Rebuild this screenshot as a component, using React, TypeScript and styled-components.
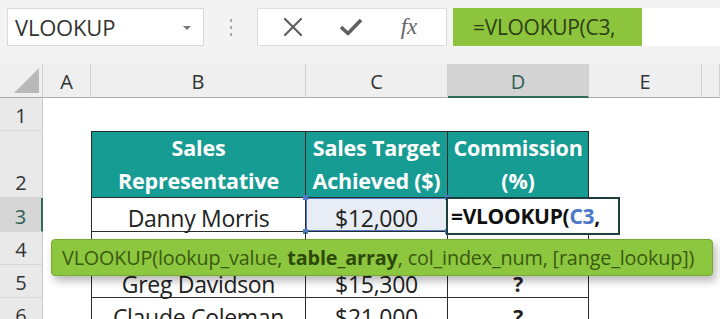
import React from "react";
import styled, { createGlobalStyle, css } from "styled-components";

const GlobalStyle = createGlobalStyle`
  html, body { margin: 0; padding: 0; background: #ffffff; overflow: hidden; }
  * { box-sizing: border-box; }
`;

const UI_FONT = `"Open Sans", "Liberation Sans", sans-serif`;

const Window = styled.div`
  position: relative;
  width: 720px;
  height: 319px;
  overflow: hidden;
  background: #ffffff;
  font-family: ${UI_FONT};
  color: #222;
`;

const TopBar = styled.div`
  height: 64px;
  background: #f3f3f3;
  display: flex;
  align-items: flex-start;
  padding: 8px 0 0 7px;
`;

const NameBox = styled.div`
  width: 197px;
  height: 38px;
  background: #fff;
  border: 1px solid #d9d9d9;
  display: flex;
  align-items: center;
  justify-content: space-between;
  padding: 0 12px 0 7px;
  font-size: 22px;
  color: #333;
  letter-spacing: -0.2px;
`;

const DropArrow = styled.span`
  width: 0;
  height: 0;
  border-left: 4px solid transparent;
  border-right: 4px solid transparent;
  border-top: 4px solid #777;
  margin-top: 2px;
`;

const Grip = styled.div`
  width: 53px;
  height: 38px;
  display: flex;
  flex-direction: column;
  align-items: center;
  justify-content: center;
  gap: 4px;
`;

const Dot = styled.span`
  width: 2px;
  height: 3px;
  background: #a8a8a8;
`;

const ButtonBox = styled.div`
  width: 190px;
  height: 38px;
  background: #fff;
  border: 1px solid #dcdcdc;
  display: flex;
  align-items: center;
  justify-content: space-around;
  padding: 0 8px 0 6px;
`;

const IconSlot = styled.span`
  width: 40px;
  display: flex;
  align-items: center;
  justify-content: center;
`;

const Fx = styled.span`
  font-family: "Liberation Serif", "DejaVu Serif", serif;
  font-style: italic;
  font-size: 23px;
  color: #666;
`;

const FormulaInput = styled.div`
  flex: 1;
  height: 38px;
  margin-left: 6px;
  background: #fff;
  display: flex;
  align-items: stretch;
`;

const FormulaHighlight = styled.div`
  width: 189px;
  background: #8cc43d;
  display: flex;
  align-items: center;
  padding-left: 20px;
  font-size: 21px;
  color: #2e3e14;
  letter-spacing: -0.3px;
`;

const Sheet = styled.div`
  display: grid;
  grid-template-columns: 43px 48px 215px 142px 141px 113px 1fr;
  grid-template-rows: 34px 33px 67px 34px 33px 33px 33px;
`;

const Corner = styled.div`
  background: #efefef;
  border-bottom: 1px solid #ababab;
  border-right: 1px solid #d0d0d0;
  position: relative;
  &::after {
    content: "";
    position: absolute;
    right: 3px;
    bottom: 4px;
    width: 0;
    height: 0;
    border-left: 25px solid transparent;
    border-bottom: 25px solid #b9b9b9;
  }
`;

const ColHeader = styled.div<{ $active?: boolean }>`
  background: #efefef;
  border-right: 1px solid #d0d0d0;
  border-bottom: 1px solid #ababab;
  display: flex;
  align-items: center;
  justify-content: center;
  padding-top: 2px;
  font-size: 20px;
  color: #333;
  ${(p) =>
    p.$active &&
    css`
      background: #d3d3d3;
      border-bottom: 2px solid #2f6b55;
      color: #2f5f50;
    `}
`;

const RowHeader = styled.div<{ $active?: boolean }>`
  background: #e9e9e9;
  border-right: 1px solid #c9c9c9;
  border-bottom: 1px solid #d6d6d6;
  display: flex;
  align-items: flex-end;
  justify-content: center;
  padding-bottom: 1px;
  font-size: 20px;
  color: #333;
  ${(p) =>
    p.$active &&
    css`
      background: #d6d6d6;
      border-right: 2px solid #2f6b55;
      color: #2f5f50;
    `}
`;

const Blank = styled.div``;

type CellKind = "head" | "data";

const Cell = styled.div<{
  $kind: CellKind;
  $left?: boolean;
  $top?: boolean;
  $bold?: boolean;
  $ref?: boolean;
}>`
  position: relative;
  display: flex;
  flex-direction: column;
  align-items: center;
  justify-content: flex-end;
  padding-bottom: 0;
  font-size: 23px;
  line-height: 26px;
  letter-spacing: -0.3px;
  color: #222;
  white-space: nowrap;
  border-right: 1px solid #2b2b2b;
  border-bottom: 1px solid #2b2b2b;
  ${(p) => p.$left && css`border-left: 1px solid #2b2b2b;`}
  ${(p) => p.$top && css`border-top: 1px solid #2b2b2b;`}
  ${(p) => p.$bold && css`font-weight: 700; font-size: 21px;`}
  ${(p) =>
    p.$kind === "head" &&
    css`
      background: #179c94;
      color: #ffffff;
      font-weight: 700;
      font-size: 21.5px;
      line-height: 33px;
      letter-spacing: -0.2px;
    `}
  ${(p) =>
    p.$ref &&
    css`
      background: #e8ecf4;
      box-shadow: inset 0 0 0 1px #4f7cc6;
    `}
`;

const Handle = styled.span<{ $pos: "tl" | "tr" | "bl" | "br" }>`
  position: absolute;
  width: 5px;
  height: 5px;
  background: #4f7cc6;
  ${(p) => (p.$pos[0] === "t" ? "top: -3px;" : "bottom: -3px;")}
  ${(p) => (p.$pos[1] === "l" ? "left: -3px;" : "right: -3px;")}
`;

const Editor = styled.div`
  position: absolute;
  left: -2px;
  top: -1px;
  width: 174px;
  height: 38px;
  background: #fff;
  border: 2px solid #1f3f3e;
  display: flex;
  align-items: center;
  padding-left: 3px;
  font-weight: 700;
  font-size: 21px;
  letter-spacing: -0.3px;
  color: #111;
  z-index: 2;
`;

const RefText = styled.span`
  color: #4a78c8;
`;

const Tooltip = styled.div`
  position: absolute;
  left: 51px;
  top: 239px;
  width: 662px;
  height: 37px;
  background: #8dc63f;
  border: 1px solid #78a834;
  border-radius: 4px;
  box-shadow: 3px 5px 9px rgba(0, 0, 0, 0.28);
  display: flex;
  align-items: center;
  padding-left: 10px;
  font-size: 19.8px;
  letter-spacing: -0.15px;
  color: #3a5a10;
  white-space: nowrap;
  z-index: 5;
`;

const Strong = styled.b`
  font-weight: 700;
  color: #2e4a0a;
`;

const CloseIcon = () => (
  <svg width="22" height="22" viewBox="0 0 22 22">
    <path d="M3 3 L19 19 M19 3 L3 19" stroke="#606060" strokeWidth="2.2" strokeLinecap="round" />
  </svg>
);

const CheckIcon = () => (
  <svg width="24" height="20" viewBox="0 0 24 20">
    <path d="M2 10 L9 16.5 L22 3" stroke="#606060" strokeWidth="3.6" fill="none" strokeLinejoin="round" />
  </svg>
);

const cols = ["A", "B", "C", "D", "E", ""];

const rows: { name: string; amount: string; comm: string }[] = [
  { name: "Danny Morris", amount: "$12,000", comm: "" },
  { name: "Sarah Jones", amount: "$9,500", comm: "?" },
  { name: "Greg Davidson", amount: "$15,300", comm: "?" },
  { name: "Claude Coleman", amount: "$21,000", comm: "?" },
];

export default function App() {
  return (
    <Window>
      <GlobalStyle />
      <TopBar>
        <NameBox>
          VLOOKUP
          <DropArrow />
        </NameBox>
        <Grip>
          <Dot />
          <Dot />
          <Dot />
        </Grip>
        <ButtonBox>
          <IconSlot>
            <CloseIcon />
          </IconSlot>
          <IconSlot>
            <CheckIcon />
          </IconSlot>
          <IconSlot>
            <Fx>fx</Fx>
          </IconSlot>
        </ButtonBox>
        <FormulaInput>
          <FormulaHighlight>=VLOOKUP(C3,</FormulaHighlight>
        </FormulaInput>
      </TopBar>

      <Sheet>
        <Corner />
        {cols.map((c, i) => (
          <ColHeader key={i} $active={c === "D"}>
            {c}
          </ColHeader>
        ))}

        <RowHeader>1</RowHeader>
        <Blank />
        <Blank />
        <Blank />
        <Blank />
        <Blank />
        <Blank />

        <RowHeader>2</RowHeader>
        <Blank />
        <Cell $kind="head" $left $top>
          <span>Sales</span>
          <span>Representative</span>
        </Cell>
        <Cell $kind="head" $top>
          <span>Sales Target</span>
          <span>Achieved ($)</span>
        </Cell>
        <Cell $kind="head" $top>
          <span>Commission</span>
          <span>(%)</span>
        </Cell>
        <Blank />
        <Blank />

        {rows.map((r, i) => (
          <React.Fragment key={r.name}>
            <RowHeader $active={i === 0}>{i + 3}</RowHeader>
            <Blank />
            <Cell $kind="data" $left>
              {r.name}
            </Cell>
            <Cell $kind="data" $ref={i === 0}>
              {r.amount}
              {i === 0 && (
                <>
                  <Handle $pos="tl" />
                  <Handle $pos="tr" />
                  <Handle $pos="bl" />
                  <Handle $pos="br" />
                </>
              )}
            </Cell>
            <Cell $kind="data" $bold>
              {r.comm}
              {i === 0 && (
                <Editor>
                  =VLOOKUP(<RefText>C3</RefText>,
                </Editor>
              )}
            </Cell>
            <Blank />
            <Blank />
          </React.Fragment>
        ))}
      </Sheet>

      <Tooltip>
        VLOOKUP(lookup_value,&nbsp;<Strong>table_array</Strong>, col_index_num, [range_lookup])
      </Tooltip>
    </Window>
  );
}
